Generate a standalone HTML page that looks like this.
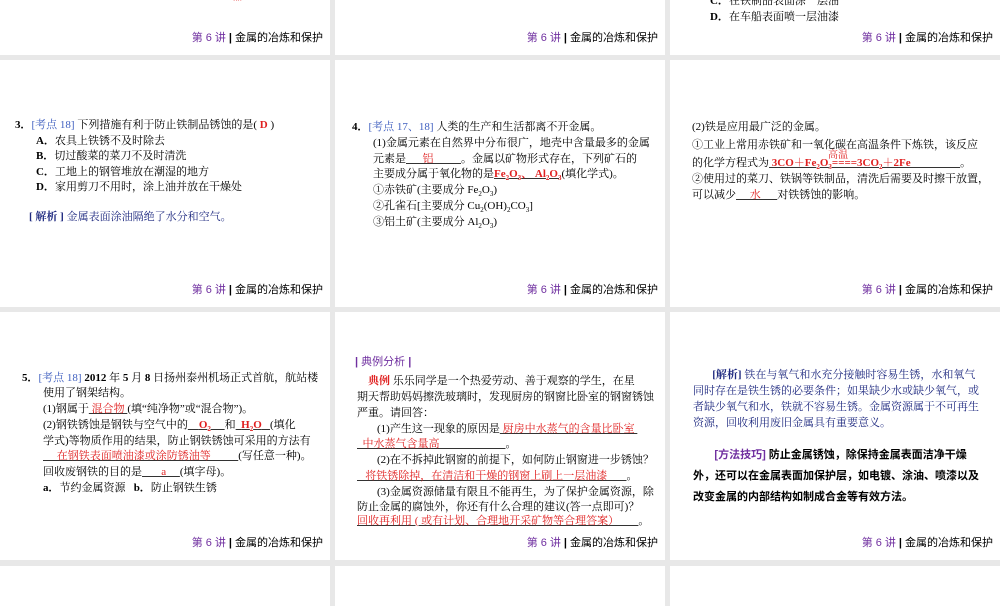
<!DOCTYPE html>
<html><head><meta charset="utf-8"><style>
*{margin:0;padding:0;box-sizing:border-box}
body{width:1000px;height:600px;background:#e8e8e8;position:relative;overflow:hidden;font-family:"Liberation Serif","Noto Serif CJK SC",serif;font-size:11px;color:#000}
.p{position:absolute;background:#fff;overflow:hidden}
.t{position:absolute;white-space:nowrap;line-height:14px}
.f{position:absolute;white-space:nowrap;font-size:11px;line-height:14px;font-family:"Liberation Sans","Noto Sans CJK SC",sans-serif}
.f .n{color:#7030a0}
.f b{font-weight:900;margin:0 3px}
.r{color:#e02020}
.u{color:#e02020;text-decoration:underline;text-decoration-color:#333}
.bl{color:#4060c0}
.nv{color:#1f2a80}
b{font-weight:bold}
</style></head><body>
<!-- row1 -->
<div class="p" style="left:0;top:0;width:330px;height:55px">
<div class="t r" style="left:233px;top:-10px;font-size:9px">晶</div>
<div class="f" style="right:7px;top:31px"><span class="n">第 6 讲</span><b>|</b>金属的冶炼和保护</div></div>
<div class="p" style="left:335px;top:0;width:330px;height:55px">
<div class="f" style="right:7px;top:31px"><span class="n">第 6 讲</span><b>|</b>金属的冶炼和保护</div></div>
<div class="p" style="left:670px;top:0;width:330px;height:55px">
<div class="t" style="left:40px;top:-6px"><b>C．</b>在铁制品表面涂一层油</div>
<div class="t" style="left:40px;top:10px"><b>D．</b>在车船表面喷一层油漆</div>
<div class="f" style="right:7px;top:31px"><span class="n">第 6 讲</span><b>|</b>金属的冶炼和保护</div></div>
<!-- row2 -->
<div class="p" style="left:0;top:60px;width:330px;height:247px">
<div class="t" style="left:15px;top:58px"><b>3．</b><span class="bl">[考点 18]</span> 下列措施有利于防止铁制品锈蚀的是( <span class="r"><b>D</b></span> )</div>
<div class="t" style="left:36px;top:74px"><b>A．</b>农具上铁锈不及时除去</div>
<div class="t" style="left:36px;top:89px"><b>B．</b>切过酸菜的菜刀不及时清洗</div>
<div class="t" style="left:36px;top:105px"><b>C．</b>工地上的钢管堆放在潮湿的地方</div>
<div class="t" style="left:36px;top:120px"><b>D．</b>家用剪刀不用时，涂上油并放在干燥处</div>
<div class="t nv" style="left:29px;top:150px"><b>[ 解析 ]</b> 金属表面涂油隔绝了水分和空气。</div>
<div class="f" style="right:7px;top:223px"><span class="n">第 6 讲</span><b>|</b>金属的冶炼和保护</div></div>
<div class="p" style="left:335px;top:60px;width:330px;height:247px">
<div class="t" style="left:17px;top:60px"><b>4．</b><span class="bl">[考点 17、18]</span> 人类的生产和生活都离不开金属。</div>
<div class="t" style="left:38px;top:76px">(1)金属元素在自然界中分布很广，地壳中含量最多的金属</div>
<div class="t" style="left:38px;top:92px">元素是<span class="u">&nbsp;&nbsp;&nbsp;&nbsp;&nbsp;&nbsp;铝&nbsp;&nbsp;&nbsp;&nbsp;&nbsp;&nbsp;&nbsp;&nbsp;&nbsp;&nbsp;</span>。金属以矿物形式存在，下列矿石的</div>
<div class="t" style="left:38px;top:107px">主要成分属于氧化物的是<span class="u"><b>Fe<sub style="font-size:7px">2</sub>O<sub style="font-size:7px">3</sub>、 Al<sub style="font-size:7px">2</sub>O<sub style="font-size:7px">3</sub></b></span>(填化学式)。</div>
<div class="t" style="left:38px;top:123px">①赤铁矿(主要成分 Fe<sub style="font-size:7px">2</sub>O<sub style="font-size:7px">3</sub>)</div>
<div class="t" style="left:38px;top:139px">②孔雀石[主要成分 Cu<sub style="font-size:7px">2</sub>(OH)<sub style="font-size:7px">2</sub>CO<sub style="font-size:7px">3</sub>]</div>
<div class="t" style="left:38px;top:155px">③铝土矿(主要成分 Al<sub style="font-size:7px">2</sub>O<sub style="font-size:7px">3</sub>)</div>
<div class="f" style="right:7px;top:223px"><span class="n">第 6 讲</span><b>|</b>金属的冶炼和保护</div></div>
<div class="p" style="left:670px;top:60px;width:330px;height:247px">
<div class="t" style="left:22px;top:60px">(2)铁是应用最广泛的金属。</div>
<div class="t" style="left:22px;top:78px">①工业上常用赤铁矿和一氧化碳在高温条件下炼铁，该反应</div>
<div class="t r" style="left:158px;top:89px;font-size:10px">高温</div>
<div class="t" style="left:22px;top:96px">的化学方程式为<span class="u"><b>&nbsp;3CO＋Fe<sub style="font-size:7px">2</sub>O<sub style="font-size:7px">3</sub>====3CO<sub style="font-size:7px">2</sub>＋2Fe&nbsp;&nbsp;&nbsp;&nbsp;&nbsp;&nbsp;&nbsp;&nbsp;&nbsp;&nbsp;&nbsp;&nbsp;&nbsp;&nbsp;&nbsp;&nbsp;&nbsp;&nbsp;</b></span>。</div>
<div class="t" style="left:22px;top:112px">②使用过的菜刀、铁锅等铁制品，清洗后需要及时擦干放置，</div>
<div class="t" style="left:22px;top:128px">可以减少<span class="u">&nbsp;&nbsp;&nbsp;&nbsp;&nbsp;水&nbsp;&nbsp;&nbsp;&nbsp;&nbsp;&nbsp;</span>对铁锈蚀的影响。</div>
<div class="f" style="right:7px;top:223px"><span class="n">第 6 讲</span><b>|</b>金属的冶炼和保护</div></div>
<!-- row3 -->
<div class="p" style="left:0;top:312px;width:330px;height:248px">
<div class="t" style="left:22px;top:59px"><b>5．</b><span class="bl">[考点 18]</span> <b>2012</b> 年 <b>5</b> 月 <b>8</b> 日扬州泰州机场正式首航，航站楼</div>
<div class="t" style="left:43px;top:74px">使用了钢架结构。</div>
<div class="t" style="left:43px;top:90px">(1)钢属于<span class="u">&nbsp;混合物&nbsp;</span>(填“纯净物”或“混合物”)。</div>
<div class="t" style="left:43px;top:106px">(2)钢铁锈蚀是钢铁与空气中的<span class="u">&nbsp;&nbsp;&nbsp;&nbsp;<b>O<sub style="font-size:7px">2</sub></b>&nbsp;&nbsp;&nbsp;&nbsp;&nbsp;</span>和<span class="u">&nbsp;&nbsp;<b>H<sub style="font-size:7px">2</sub>O</b>&nbsp;&nbsp;&nbsp;</span>(填化</div>
<div class="t" style="left:43px;top:122px">学式)等物质作用的结果，防止钢铁锈蚀可采用的方法有</div>
<div class="t" style="left:43px;top:137px"><span class="u">&nbsp;&nbsp;&nbsp;&nbsp;&nbsp;在钢铁表面喷油漆或涂防锈油等&nbsp;&nbsp;&nbsp;&nbsp;&nbsp;&nbsp;&nbsp;&nbsp;&nbsp;&nbsp;</span>(写任意一种)。</div>
<div class="t" style="left:43px;top:153px">回收废钢铁的目的是<span class="u">&nbsp;&nbsp;&nbsp;&nbsp;&nbsp;&nbsp;&nbsp;a&nbsp;&nbsp;&nbsp;&nbsp;&nbsp;</span>(填字母)。</div>
<div class="t" style="left:43px;top:169px"><b>a．</b>节约金属资源&nbsp;&nbsp;&nbsp;<b>b．</b>防止钢铁生锈</div>
<div class="f" style="right:7px;top:224px"><span class="n">第 6 讲</span><b>|</b>金属的冶炼和保护</div></div>
<div class="p" style="left:335px;top:312px;width:330px;height:248px">
<div class="t" style="left:20px;top:43px;color:#7030a0;font-family:'Liberation Sans','Noto Sans CJK SC',sans-serif"><b>|</b> 典例分析 <b>|</b></div>
<div class="t" style="left:22px;top:62px">&nbsp;&nbsp;&nbsp;&nbsp;<b class="r">典例</b> 乐乐同学是一个热爱劳动、善于观察的学生，在星</div>
<div class="t" style="left:22px;top:78px">期天帮助妈妈擦洗玻璃时，发现厨房的钢窗比卧室的钢窗锈蚀</div>
<div class="t" style="left:22px;top:94px">严重。请回答：</div>
<div class="t" style="left:42px;top:110px">(1)产生这一现象的原因是<span class="u">&nbsp;厨房中水蒸气的含量比卧室&nbsp;</span></div>
<div class="t" style="left:22px;top:125px"><span class="u">&nbsp;&nbsp;中水蒸气含量高&nbsp;&nbsp;&nbsp;&nbsp;&nbsp;&nbsp;&nbsp;&nbsp;&nbsp;&nbsp;&nbsp;&nbsp;&nbsp;&nbsp;&nbsp;&nbsp;&nbsp;&nbsp;&nbsp;&nbsp;&nbsp;&nbsp;&nbsp;&nbsp;</span>。</div>
<div class="t" style="left:42px;top:141px">(2)在不拆掉此钢窗的前提下，如何防止钢窗进一步锈蚀？</div>
<div class="t" style="left:22px;top:157px"><span class="u">&nbsp;&nbsp;&nbsp;将铁锈除掉，在清洁和干燥的钢窗上刷上一层油漆&nbsp;&nbsp;&nbsp;&nbsp;&nbsp;&nbsp;&nbsp;</span>。</div>
<div class="t" style="left:42px;top:173px">(3)金属资源储量有限且不能再生，为了保护金属资源，除</div>
<div class="t" style="left:22px;top:188px">防止金属的腐蚀外，你还有什么合理的建议(答一点即可)？</div>
<div class="t" style="left:22px;top:202px"><span class="u">回收再利用 ( 或有计划、合理地开采矿物等合理答案）&nbsp;&nbsp;&nbsp;&nbsp;&nbsp;&nbsp;&nbsp;</span>。</div>
<div class="f" style="right:7px;top:224px"><span class="n">第 6 讲</span><b>|</b>金属的冶炼和保护</div></div>
<div class="p" style="left:670px;top:312px;width:330px;height:248px">
<div class="t nv" style="left:23px;top:56px">&nbsp;&nbsp;&nbsp;&nbsp;&nbsp;&nbsp;&nbsp;<b>[解析]</b> 铁在与氧气和水充分接触时容易生锈，水和氧气</div>
<div class="t nv" style="left:23px;top:72px">同时存在是铁生锈的必要条件；如果缺少水或缺少氧气，或</div>
<div class="t nv" style="left:23px;top:88px">者缺少氧气和水，铁就不容易生锈。金属资源属于不可再生</div>
<div class="t nv" style="left:23px;top:104px">资源，回收利用废旧金属具有重要意义。</div>
<div class="t" style="left:23px;top:136px;font-family:'Liberation Sans','Noto Sans CJK SC',sans-serif;font-weight:bold">&nbsp;&nbsp;&nbsp;&nbsp;&nbsp;&nbsp;&nbsp;<span style="color:#7030a0">[方法技巧]</span> 防止金属锈蚀，除保持金属表面洁净干燥</div>
<div class="t" style="left:23px;top:157px;font-family:'Liberation Sans','Noto Sans CJK SC',sans-serif;font-weight:bold">外，还可以在金属表面加保护层，如电镀、涂油、喷漆以及</div>
<div class="t" style="left:23px;top:178px;font-family:'Liberation Sans','Noto Sans CJK SC',sans-serif;font-weight:bold">改变金属的内部结构如制成合金等有效方法。</div>
<div class="f" style="right:7px;top:224px"><span class="n">第 6 讲</span><b>|</b>金属的冶炼和保护</div></div>
<!-- row4 -->
<div class="p" style="left:0;top:566px;width:330px;height:40px"></div>
<div class="p" style="left:335px;top:566px;width:330px;height:40px"></div>
<div class="p" style="left:670px;top:566px;width:330px;height:40px"></div>
</body></html>
